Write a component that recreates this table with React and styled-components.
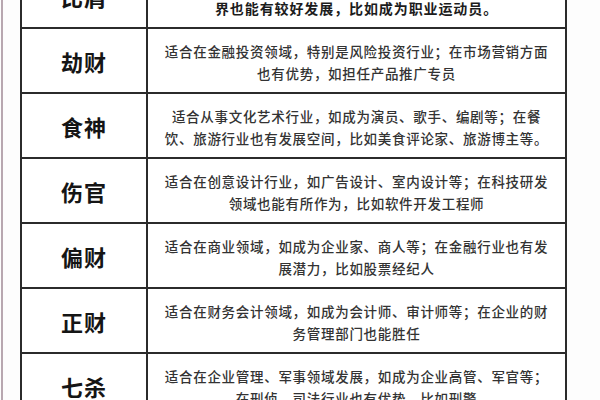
import React from "react";
import styled, { createGlobalStyle } from "styled-components";

const GlobalStyle = createGlobalStyle`
  html, body {
    margin: 0;
    padding: 0;
    background: #ffffff;
    overflow: hidden;
  }
  body {
    font-family: "Noto Sans CJK SC", "Noto Sans", sans-serif;
  }
`;

const rows = [
  {
    name: "比肩",
    lines: ["适合在团队合作的行业，如销售、公关等；在体育", "界也能有较好发展，比如成为职业运动员。"],
    strong: true,
  },
  {
    name: "劫财",
    lines: ["适合在金融投资领域，特别是风险投资行业；在市场营销方面", "也有优势，如担任产品推广专员"],
  },
  {
    name: "食神",
    lines: ["适合从事文化艺术行业，如成为演员、歌手、编剧等；在餐", "饮、旅游行业也有发展空间，比如美食评论家、旅游博主等。"],
  },
  {
    name: "伤官",
    lines: ["适合在创意设计行业，如广告设计、室内设计等；在科技研发", "领域也能有所作为，比如软件开发工程师"],
  },
  {
    name: "偏财",
    lines: ["适合在商业领域，如成为企业家、商人等；在金融行业也有发", "展潜力，比如股票经纪人"],
  },
  {
    name: "正财",
    lines: ["适合在财务会计领域，如成为会计师、审计师等；在企业的财", "务管理部门也能胜任"],
  },
  {
    name: "七杀",
    lines: ["适合在企业管理、军事领域发展，如成为企业高管、军官等；", "在刑侦、司法行业也有优势，比如刑警"],
  },
];

const App = () => {
  return (
    <>
      <GlobalStyle />
      <Page>
        <Rule />
        <Sheet>
          {rows.map((row) => (
            <Row key={row.name}>
              <Name>{row.name}</Name>
              <Desc $strong={row.strong}>
                {row.lines.map((line) => (
                  <Line key={line}>{line}</Line>
                ))}
              </Desc>
            </Row>
          ))}
        </Sheet>
      </Page>
    </>
  );
};

const Page = styled.div`
  display: flex;
  width: 600px;
  height: 400px;
  overflow: hidden;
  background: #fdfdfd;
`;

const Rule = styled.div`
  width: 2px;
  margin-left: 1px;
  background: #b8a7b0;
  flex-shrink: 0;
`;

const Sheet = styled.div`
  width: 543px;
  margin-left: 17px;
  margin-top: -36px;
  align-self: flex-start;
  background: #ffffff;
  border-left: 2px solid #2b2b2b;
  border-right: 2px solid #2b2b2b;
  flex-shrink: 0;
`;

const Row = styled.div`
  display: grid;
  grid-template-columns: 126px 1fr;
  height: 63px;
  border-bottom: 2px solid #2b2b2b;
`;

const Name = styled.div`
  display: flex;
  align-items: center;
  justify-content: center;
  border-right: 2px solid #2b2b2b;
  font-size: 22px;
  font-weight: 700;
  letter-spacing: 1px;
  color: #151515;
`;

const Desc = styled.div`
  display: flex;
  flex-direction: column;
  align-items: center;
  justify-content: center;
  padding-top: 2px;
  text-align: center;
  color: ${(p) => (p.$strong ? "#1c1c1c" : "#333333")};
  font-size: ${(p) => (p.$strong ? "14px" : "13.5px")};
  font-weight: ${(p) => (p.$strong ? 700 : 500)};
  letter-spacing: ${(p) => (p.$strong ? "0.9px" : "0.7px")};
  line-height: 22px;
`;

const Line = styled.div`
  white-space: nowrap;
`;

export default App;
